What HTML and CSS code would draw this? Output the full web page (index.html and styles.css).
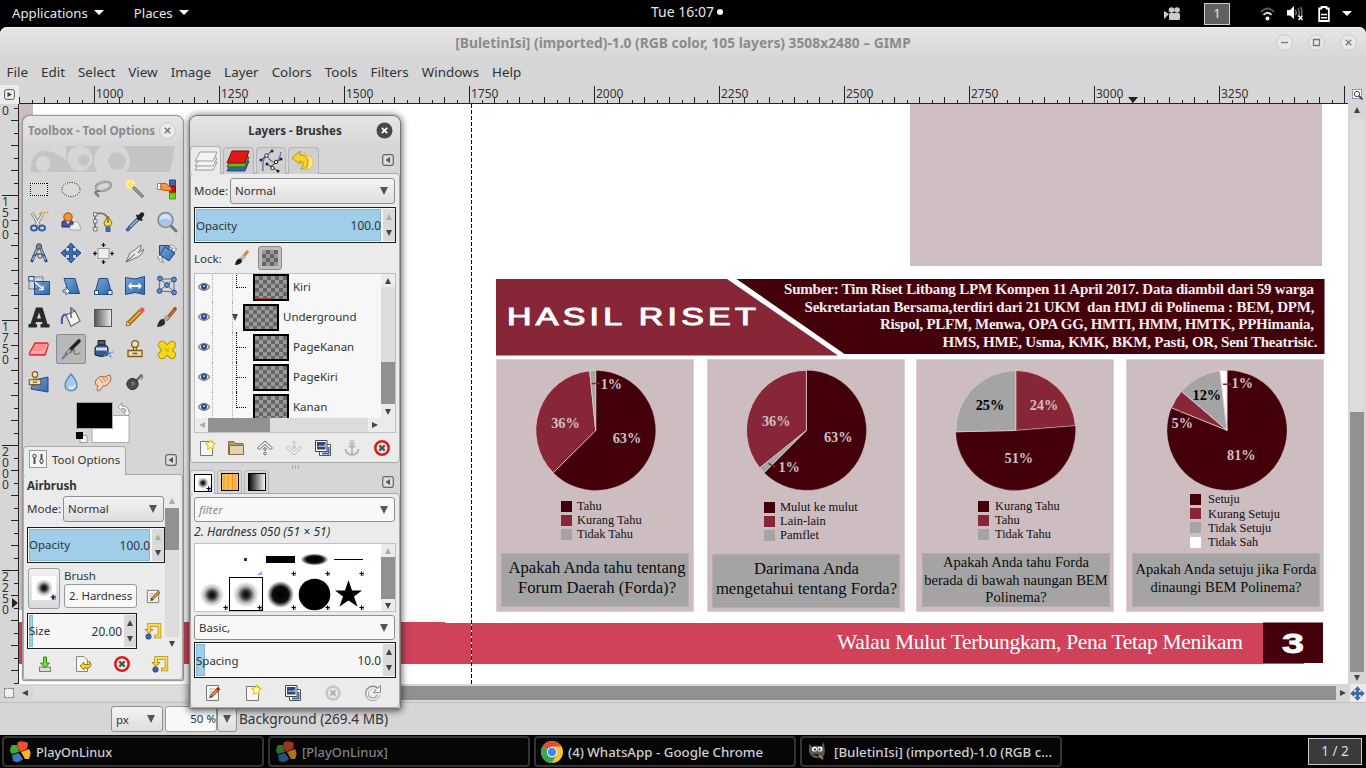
FILE: index.html
```html
<!DOCTYPE html>
<html lang="en">
<head>
<meta charset="utf-8">
<title>GIMP</title>
<link rel="stylesheet" href="styles.css">
</head>
<body>
<svg width="0" height="0" class="defs">
  <defs>
    <linearGradient id="blue" x1="0" y1="0" x2="1" y2="1"><stop offset="0" stop-color="#7ba6d6"/><stop offset="1" stop-color="#2f66aa"/></linearGradient>
    <linearGradient id="bw"><stop offset="0" stop-color="#000"/><stop offset="1" stop-color="#fff"/></linearGradient>
    <linearGradient id="grayfade"><stop offset="0" stop-color="#555"/><stop offset="1" stop-color="#eee"/></linearGradient>
    <radialGradient id="soft"><stop offset="0" stop-color="#000"/><stop offset=".3" stop-color="#000" stop-opacity=".8"/><stop offset=".65" stop-color="#000" stop-opacity=".25"/><stop offset="1" stop-color="#000" stop-opacity="0"/></radialGradient>
    <radialGradient id="firm"><stop offset="0" stop-color="#000"/><stop offset=".6" stop-color="#000" stop-opacity=".95"/><stop offset="1" stop-color="#000" stop-opacity="0"/></radialGradient>
    <symbol id="eye" viewBox="0 0 12 10"><path d="M0 5Q6-2 12 5Q6 12 0 5Z" fill="#e8e8e8" stroke="#8a8a80" stroke-width="1.3"/><circle cx="6" cy="4.8" r="3" fill="#204a87"/><circle cx="6" cy="4.2" r="1.1" fill="#9cc0e8"/></symbol>
    <symbol id="newdoc" viewBox="0 0 18 18"><path d="M2.500 2.500H14.500V16.500H2.500Z" fill="#f6f6f4" stroke="#777"/><path d="M12.500 1L14 3.800L17 4.500L15 6.800L15.300 10L12.500 8.700L9.700 10L10 6.800L8 4.500L11 3.800Z" fill="#fffbe0" stroke="#e8cf00" stroke-width="1.300"/></symbol>
    <symbol id="dup" viewBox="0 0 18 18"><path d="M5.500 5.500H16.500V16.500H5.500Z" fill="#fff" stroke="#555"/><path d="M8 14.500H14.500V8" fill="none" stroke="#4068a0" stroke-width="2"/><path d="M1.500 1.500H13V12.500H1.500Z" fill="#fff" stroke="#444"/><path d="M3 3H11.500V10.500H3Z" fill="#2c4a78"/><path d="M3 8L6 6L8 7L11.500 5V8Z" fill="#8eb0d8"/></symbol>
    <symbol id="del" viewBox="0 0 18 18"><circle cx="9" cy="9" r="6.700" fill="#eee" stroke="#d8201c" stroke-width="2.600"/><path d="M6.300 6.300L11.700 11.700M11.700 6.300L6.300 11.700" stroke="#555" stroke-width="2.400"/></symbol>
    <symbol id="reset" viewBox="0 0 18 18"><path d="M5 9V3H15.500V14.500H10" fill="none" stroke="#b08c00" stroke-width="3.400"/><path d="M1 7.500H9L5 11.500Z" fill="#f5d040" stroke="#b08c00"/><path d="M5 8.500V3H15.500V14.500H10.600" fill="none" stroke="#f9da50" stroke-width="2"/><circle cx="4.500" cy="14.500" r="2.700" fill="#3a68a8" stroke="#204a87" stroke-width=".8"/></symbol>
    <symbol id="edit" viewBox="0 0 18 18"><path d="M2.500 2.500H14.500V15.500H2.500Z" fill="#f6f6f4" stroke="#777"/><path d="M4.500 6H11M4.500 8.500H9M4.500 11H8" stroke="#aaa"/><path d="M7 12.500L15 4" stroke="#7a4a10" stroke-width="3"/><path d="M8 11.500L14.500 4.500" stroke="#e8a040" stroke-width="1.600"/><path d="M5.500 14L6.800 11L8.500 12.700Z" fill="#333"/></symbol>
    <symbol id="move" viewBox="0 0 22 22"><path d="M11 1L15 5.500H12.300V9.700H16.500V7L21 11L16.500 15V12.300H12.300V16.500H15L11 21L7 16.500H9.700V12.300H5.500V15L1 11L5.500 7V9.700H9.700V5.500H7Z" fill="#3a72b8" stroke="#204a87"/></symbol>
    <symbol id="pol" viewBox="0 0 22 22"><path d="M9 1Q14-1 19 2L18 8L11 11Q7 5 9 1Z" fill="#f0512d"/><path d="M3 4L8 4L10 11L3 13Q-1 10 3 4Z" fill="#3faa35"/><path d="M12 11L20 8Q23 12 20 18L16 18Z" fill="#f7b52b"/><path d="M3 14L10 12L14 18Q10 23 4 20Z" fill="#3b78c0"/></symbol>
    <symbol id="stamp" viewBox="0 0 22 22"><path d="M9.500 9H12.500V13H9.500Z" fill="#e8cc98" stroke="#7a5a1c"/><circle cx="11" cy="6" r="3.400" fill="#f2dfb6" stroke="#7a5a1c" stroke-width="1.300"/><path d="M4 12.500H18V18.500H4Z" fill="#f2dfb6" stroke="#7a5a1c" stroke-width="1.300"/><path d="M8.500 15.500H13.500" stroke="#7a5a1c" stroke-width="1.500"/></symbol>
    <symbol id="menubtn" viewBox="0 0 12 12"><rect x=".7" y=".7" width="10.600" height="10.600" rx="2" fill="#ddd" stroke="#666" stroke-width="1.200"/><path d="M8 3V9L3.500 6Z" fill="#555"/></symbol>
    <symbol id="plus" viewBox="0 0 6 6"><path d="M6 0V6H1Z" fill="#8aa4ff"/><path d="M3 .5V5.500M.5 3H5.500" stroke="#000" stroke-width="1.200"/></symbol>
  </defs>
</svg>

<header class="topbar">
  <span class="top-item">Applications<i class="caret"></i></span>
  <span class="top-item">Places<i class="caret"></i></span>
  <span class="clock">Tue 16:07<i class="dot"></i></span>
  <div class="tray">
    <svg class="cam" width="17" height="14" viewBox="0 0 17 14"><path d="M0 4L5 7L0 12Z" fill="#ccc"/><circle cx="7.500" cy="3" r="2.800" fill="#ccc"/><circle cx="13" cy="3" r="2.800" fill="#ccc"/><rect x="5" y="6" width="11" height="7" rx="1.500" fill="#ccc"/></svg>
    <span class="ws">1</span>
    <svg class="wifi" width="15" height="14" viewBox="0 0 15 14" fill="none"><path d="M1 5Q7.500-2 14 5" stroke="#555" stroke-width="1.800"/><path d="M3.500 8Q7.500 3.500 11.500 8" stroke="#ddd" stroke-width="1.800"/><circle cx="7.500" cy="11.500" r="2" fill="#fff"/></svg>
    <svg class="vol" width="17" height="15" viewBox="0 0 17 15"><path d="M0 4H3L7 0V13L3 9.500H0Z" fill="#fff"/><path d="M8.500 3.500Q10 6.500 8.500 9.500M11 2Q13.500 6.500 11 11M13.500 1Q16 5 14.500 9" fill="none" stroke="#777" stroke-width="1.300"/><path d="M11.500 9.500L15.500 14M15.500 9.500L11.500 14" stroke="#fff" stroke-width="1.400"/></svg>
    <svg class="bat" width="12" height="16" viewBox="0 0 12 16"><path d="M3.500 2.500V1H8.500V2.500H10.800V15H1.200V2.500Z" fill="none" stroke="#fff" stroke-width="1.800"/><path d="M3 8.500H9M3 11.700H9" stroke="#fff" stroke-width="1.500"/></svg>
    <i class="caret"></i>
  </div>
</header>

<main class="gimp">
  <div class="titlebar">
    <span class="title">[BuletinIsi] (imported)-1.0 (RGB color, 105 layers) 3508x2480 – GIMP</span>
    <div class="wbtns">
      <svg viewBox="0 0 17 17"><circle cx="8.500" cy="8.500" r="7.800"/><path d="M5 8.500H12"/></svg>
      <svg viewBox="0 0 17 17"><circle cx="8.500" cy="8.500" r="7.800"/><path d="M5.500 5.500H11.500V11.500H5.500Z"/></svg>
      <svg viewBox="0 0 17 17"><circle cx="8.500" cy="8.500" r="7.800"/><path d="M5.800 5.800L11.200 11.200M11.200 5.800L5.800 11.200"/></svg>
    </div>
  </div>
  <nav class="menubar"><span>File</span><span>Edit</span><span>Select</span><span>View</span><span>Image</span><span>Layer</span><span>Colors</span><span>Tools</span><span>Filters</span><span>Windows</span><span>Help</span></nav>

  <div class="hruler-row">
    <div class="corner"><svg width="11" height="11" viewBox="0 0 11 11"><rect x=".6" y=".6" width="9.800" height="9.800" rx="2" fill="#eee" stroke="#555"/><path d="M3.500 3V8L8 5.500Z" fill="#444"/></svg></div>
    <svg class="hruler" width="1329" height="19" shape-rendering="crispEdges">
      <path d="M0 18.500H1329" stroke="#222"/>
      <g stroke="#222"><path d="M75 9.500H1329" stroke-width="17" stroke-dasharray="1 124"/><path d="M0 15H1329" stroke-width="7" stroke-dasharray="1 24"/><path d="M13 16.500H1329" stroke-width="4" stroke-dasharray="1 24"/></g>
      <g class="rtext"><text x="77" y="13">1000</text><text x="202" y="13">1250</text><text x="327" y="13">1500</text><text x="452" y="13">1750</text><text x="577" y="13">2000</text><text x="702" y="13">2250</text><text x="827" y="13">2500</text><text x="952" y="13">2750</text><text x="1077" y="13">3000</text><text x="1202" y="13">3250</text></g>
      <path d="M1109 12H1119L1114 18Z" fill="#222" shape-rendering="auto"/>
    </svg>
    <div class="corner-r"><svg width="11" height="11" viewBox="0 0 11 11"><rect x=".5" y=".5" width="9" height="9" fill="#fff" stroke="#204a87" stroke-dasharray="1 1"/><circle cx="5" cy="5" r="2.600" fill="none" stroke="#444"/><path d="M7 7L10.500 10.500" stroke="#444" stroke-width="1.800"/></svg></div>
  </div>

  <div class="work">
    <svg class="vruler" width="19" height="581" shape-rendering="crispEdges">
      <path d="M18.500 0V581" stroke="#222"/>
      <g stroke="#222"><path d="M10 91V581" stroke-width="17" stroke-dasharray="1 124"/><path d="M14.500 16V581" stroke-width="7" stroke-dasharray="1 24"/><path d="M16 4V581" stroke-width="4" stroke-dasharray="1 24"/></g>
      <g class="rtext"><text x="2" y="11">0</text>
      <text y="102"><tspan x="2">1</tspan><tspan x="2" dy="11">5</tspan><tspan x="2" dy="11">0</tspan><tspan x="2" dy="11">0</tspan></text>
      <text y="227"><tspan x="2">1</tspan><tspan x="2" dy="11">7</tspan><tspan x="2" dy="11">5</tspan><tspan x="2" dy="11">0</tspan></text>
      <text y="352"><tspan x="2">2</tspan><tspan x="2" dy="11">0</tspan><tspan x="2" dy="11">0</tspan><tspan x="2" dy="11">0</tspan></text>
      <text y="477"><tspan x="2">2</tspan><tspan x="2" dy="11">2</tspan><tspan x="2" dy="11">5</tspan><tspan x="2" dy="11">0</tspan></text></g>
      <path d="M12 494V504L18 499Z" fill="#222" shape-rendering="auto"/>
    </svg>

    <section class="canvas">
      <div class="leftstrip"></div>
      <div class="pinkblock"></div>
      <div class="guide"></div>
      <div class="poster">
        <svg class="banner" width="829" height="77" viewBox="0 0 829 77">
          <path d="M0 0H231L342 76.500H0Z" fill="#872637"/>
          <path d="M240.500 0H828.500V75H348.500Z" fill="#43000b"/>
          <text class="hasil" x="11" y="46" textLength="253" lengthAdjust="spacingAndGlyphs">HASIL RISET</text>
          <g class="src"><text x="288" y="15" textLength="530">Sumber: Tim Riset Litbang LPM Kompen 11 April 2017. Data diambil dari 59 warga</text>
          <text x="308.500" y="32.500" textLength="510" xml:space="preserve">Sekretariatan Bersama,terdiri dari 21 UKM  dan HMJ di Polinema : BEM, DPM,</text>
          <text x="384" y="50" textLength="434">Rispol, PLFM, Menwa, OPA GG, HMTI, HMM, HMTK, PPHimania,</text>
          <text x="446.500" y="67.500" textLength="375">HMS, HME, Usma, KMK, BKM, Pasti, OR, Seni Theatrisic.</text></g>
        </svg>
        <div class="cards">
          <article class="card">
            <svg class="pie" viewBox="-99.700 -70.500 198 135"><path class="d" d="M0 0V-60A60 60 0 1 1-42.500 42.300Z"/><path class="m" d="M0 0L-42.500 42.300A60 60 0 0 1-6-59.700Z"/><path class="g" d="M0 0L-6-59.700L0-60Z"/><path class="tick" d="M-4-47H4"/><text x="5" y="-42">1%</text><text x="-44.500" y="-3">36%</text><text x="17" y="12.500">63%</text></svg>
            <ul class="legend lg1"><li><i class="sd"></i>Tahu</li><li><i class="sm"></i>Kurang Tahu</li><li><i class="sg"></i>Tidak Tahu</li></ul>
            <p class="q q1">Apakah Anda tahu tentang<br>Forum Daerah (Forda)?</p>
          </article>
          <article class="card c2">
            <svg class="pie" viewBox="-99.400 -70.300 198 135"><path class="d" d="M0 0V-60A60 60 0 1 1-42.300 42.500Z"/><path class="g" d="M0 0L-42.300 42.500L-46.700 37.600Z"/><path class="m" d="M0 0L-46.700 37.600A60 60 0 0 1 0-60Z"/><path class="tick" d="M-38 33L-31 37"/><text x="-28" y="41.500">1%</text><text x="-44.500" y="-4">36%</text><text x="17.500" y="11.500">63%</text></svg>
            <ul class="legend lg2"><li><i class="sd"></i>Mulut ke mulut</li><li><i class="sm"></i>Lain-lain</li><li><i class="sg"></i>Pamflet</li></ul>
            <p class="q q2">Darimana Anda<br>mengetahui tentang Forda?</p>
          </article>
          <article class="card c3">
            <svg class="pie" viewBox="-99.700 -70.500 198 135"><path class="m" d="M0 0V-60A60 60 0 0 1 59.800-4.700Z"/><path class="d" d="M0 0L59.800-4.700A60 60 0 1 1-60 1.300Z"/><path class="g" d="M0 0L-60 1.300A60 60 0 0 1 0-60Z"/><text class="k" x="-40" y="-21">25%</text><text x="14" y="-21">24%</text><text x="-11.200" y="32">51%</text></svg>
            <ul class="legend lg3"><li><i class="sd"></i>Kurang Tahu</li><li><i class="sm"></i>Tahu</li><li><i class="sg"></i>Tidak Tahu</li></ul>
            <p class="q q3">Apakah Anda tahu Forda<br>berada di bawah naungan BEM<br>Polinema?</p>
          </article>
          <article class="card c4">
            <svg class="pie" viewBox="-101 -70.300 198 135"><path class="d" d="M0 0V-60A60 60 0 1 1-55.600-22.500Z"/><path class="m" d="M0 0L-55.600-22.500A60 60 0 0 1-45.500-39Z"/><path class="g" d="M0 0L-45.500-39A60 60 0 0 1-7.200-59.600Z"/><path class="w" d="M0 0L-7.200-59.600L0-60Z"/><path class="tick" d="M-4-46H4M-47-19L-45-16"/><text x="4.500" y="-42">1%</text><text class="k" x="-34.500" y="-30">12%</text><text x="-55.500" y="-2.500">5%</text><text x="0" y="30">81%</text></svg>
            <ul class="legend lg4"><li><i class="sd"></i>Setuju</li><li><i class="sm"></i>Kurang Setuju</li><li><i class="sg"></i>Tidak Setuju</li><li><i class="sw"></i>Tidak Sah</li></ul>
            <p class="q q4">Apakah Anda setuju jika Forda<br>dinaungi BEM Polinema?</p>
          </article>
        </div>
      </div>
      <footer class="strip">
        <svg width="1304" height="42" viewBox="0 0 1304 42"><path d="M0 0H426V1H1304V41H1285V42H0Z" fill="#d0415a"/><path d="M1244 .5H1304V41H1244Z" fill="#43000b"/><text class="walau" x="818" y="26.500" textLength="406">Walau Mulut Terbungkam, Pena Tetap Menikam</text><text class="three" x="1263" y="31" textLength="22" lengthAdjust="spacingAndGlyphs">3</text></svg>
      </footer>
    </section>

    <div class="vscroll"><i class="tri up"></i><div class="vtrack"></div><div class="vthumb"></div><i class="tri down"></i></div>
  </div>

  <div class="hscroll"><i class="qmask"></i><i class="tri left"></i><div class="htrack"></div><div class="hthumb"></div><i class="tri right"></i><div class="navbox"><svg width="15" height="15"><use href="#move"/></svg></div></div>

  <div class="status">
    <div class="combo unit"><span>px</span><i class="tri down big"></i></div>
    <div class="zoom">50 %</div>
    <div class="combo zdrop"><i class="tri down big"></i></div>
    <span class="msg">Background (269.4 MB)</span>
  </div>
</main>

<footer class="taskbar">
  <div class="task"><svg width="22" height="22"><use href="#pol"/></svg>PlayOnLinux</div>
  <div class="task dim"><svg width="22" height="22"><use href="#pol"/></svg>[PlayOnLinux]</div>
  <div class="task wide"><svg width="22" height="22" viewBox="0 0 22 22"><circle cx="11" cy="11" r="11" fill="#f8c62c"/><path d="M11 11L1.500 5.500A11 11 0 0 1 20.500 5.500H11Z" fill="#e24a3b"/><path d="M11 11L1.500 5.500A11 11 0 0 0 11 22L15.500 13.500Z" fill="#34a853"/><circle cx="11" cy="11" r="5.200" fill="#fff"/><circle cx="11" cy="11" r="4.200" fill="#4285f4"/></svg>(4) WhatsApp - Google Chrome</div>
  <div class="task wide"><svg width="22" height="22" viewBox="0 0 22 22"><path d="M2 3L6 6Q10 3 14 6L17 1L18 11Q17 17 11 17Q5 18 2 11Z" fill="#5e5a52"/><circle cx="7.500" cy="8" r="2.600" fill="#eee"/><circle cx="13" cy="8" r="2.600" fill="#eee"/><circle cx="8" cy="8.500" r="1" fill="#111"/><circle cx="12.500" cy="8.500" r="1" fill="#111"/><path d="M5 13H14L11 16Z" fill="#222"/><path d="M12 14L16 18" stroke="#c87820" stroke-width="2"/></svg>[BuletinIsi] (imported)-1.0 (RGB c...</div>
  <div class="pager">1 / 2</div>
</footer>

<section class="win toolbox">
  <div class="wtitle off">Toolbox - Tool Options<svg class="close" viewBox="0 0 17 17"><circle cx="8.500" cy="8.500" r="7.800" fill="#ececec" stroke="#c8c8c8"/><path d="M5.800 5.800L11.200 11.200M11.200 5.800L5.800 11.200" stroke="#777" stroke-width="1.500"/></svg></div>
  <svg class="wilber" width="145" height="26" viewBox="0 0 145 26"><path d="M0 26Q-1 5 14 5Q24 5 35 14V0H144Q142 12 139 26Z" fill="#c4c4c4"/><ellipse cx="12" cy="18" rx="7" ry="8" fill="#d6d6d6"/><circle cx="49" cy="12.500" r="12.500" fill="#d6d6d6"/><circle cx="53" cy="14" r="5.500" fill="#c4c4c4"/><circle cx="81" cy="15" r="18" fill="#d6d6d6"/><circle cx="86" cy="15" r="9" fill="#c4c4c4"/></svg>
  <div class="tools">
    <svg viewBox="0 0 22 22"><rect x="2.500" y="5.500" width="17" height="12" fill="#d8dcd4" stroke="#fff"/><g shape-rendering="crispEdges" stroke="#000" stroke-dasharray="1 1"><path d="M2 5.500H20M2 17.500H20M2.500 5V18M19.500 5V18"/></g></svg>
    <svg viewBox="0 0 22 22"><ellipse cx="11" cy="11.500" rx="9" ry="7" fill="#d8dcd4" stroke="#fff"/><ellipse cx="11" cy="11.500" rx="9" ry="7" fill="none" stroke="#000" stroke-dasharray="1.200 1.200"/></svg>
    <svg viewBox="0 0 22 22"><path d="M5 12Q2 7 8 5Q18 2 19 7Q18 13 8 13Q2 13 4 16Q7 17 6 19" fill="none" stroke="#777" stroke-width="2.200"/><path d="M5 12Q2 7 8 5Q18 2 19 7Q18 13 8 13" fill="none" stroke="#d8d8d8" stroke-width=".9"/></svg>
    <svg viewBox="0 0 22 22"><circle cx="6.500" cy="6.500" r="5" fill="#fff3a0" opacity=".8"/><path d="M6.500 2.500L7.700 5.300L10.500 6.500L7.700 7.700L6.500 10.500L5.300 7.700L2.500 6.500L5.300 5.300Z" fill="#ffe84a"/><path d="M9 9L19 19" stroke="#555" stroke-width="3"/><path d="M9 9L18.500 18.500" stroke="#bbb5a0" stroke-width="1.200"/></svg>
    <svg viewBox="0 0 22 22"><path d="M13.500 2H19.500V8H13.500Z" fill="#3a68a8" stroke="#204a87"/><path d="M13.500 8.500H19.500V14.500H13.500Z" fill="#d01010" stroke="#900"/><path d="M13.500 15H19.500V21H13.500Z" fill="#73d216" stroke="#4e9a06"/><path d="M1.500 5.500H5V11.500H1.500Z" fill="#fff" stroke="#888"/><path d="M5 5.500H10L15 9.500V12.500H9L5 11.500Z" fill="#f9963a" stroke="#c05a00"/></svg>

    <svg viewBox="0 0 22 22"><path d="M12 11V2.500H21" fill="none" stroke="#e8941a" stroke-width="1.300" stroke-dasharray="2 1"/><path d="M4 3L11 15M15 4L8 15" stroke="#777" stroke-width="3"/><path d="M4 3L11 15M15 4L8 15" stroke="#eee" stroke-width="1.400"/><ellipse cx="6" cy="18" rx="3" ry="2.600" fill="none" stroke="#2f5fa5" stroke-width="2"/><ellipse cx="14" cy="18" rx="3" ry="2.600" fill="none" stroke="#2f5fa5" stroke-width="2"/></svg>
    <svg viewBox="0 0 22 22"><path d="M2 17V12Q7 7 13 12V17Z" fill="#2f5fa5" stroke="#704"/><path d="M6 11L8 14L10 11Z" fill="#fff"/><circle cx="8" cy="7" r="4.200" fill="#f0953c" stroke="#a04a00"/><path d="M10 20Q9 15 13 15Q14 11 18 12Q20 15 21 20Z" fill="#eee" stroke="#aaa"/></svg>
    <svg viewBox="0 0 22 22"><path d="M3 4V19M4 4Q13 1 16 9" fill="none" stroke="#666" stroke-width="1.500"/><path d="M1.500 2.500H5V6H1.500ZM1.500 9.500H5V13H1.500ZM1.500 17.500H5V21H1.500Z" fill="#eee" stroke="#777"/><path d="M16 6L20 13L18 16H13L12 13Z" fill="#f6dc4c" stroke="#8a6d00"/><path d="M13.500 16.500H18.500V22H13.500Z" fill="#3a68a8"/><path d="M16 8V13" stroke="#333"/></svg>
    <svg viewBox="0 0 22 22"><path d="M14 9L5 18" stroke="#35506c" stroke-width="3.800"/><path d="M14 9L6 17" stroke="#9cc4ee" stroke-width="1.600"/><path d="M12.500 5L18 10.500" stroke="#222" stroke-width="2.300"/><path d="M15 8L18 4.500" stroke="#222" stroke-width="4.400" stroke-linecap="round"/><circle cx="3.800" cy="19.500" r="2" fill="#2f66aa"/></svg>
    <svg viewBox="0 0 22 22"><path d="M15 16L20 21" stroke="#777" stroke-width="3" stroke-linecap="round"/><circle cx="9.500" cy="10" r="7.500" fill="#a9c6ea" stroke="#888" stroke-width="1.500"/><path d="M3.500 10Q9 7 15.500 10Q15 4 9.500 4Q4 4 3.500 10Z" fill="#d3e2f4"/></svg>

    <svg viewBox="0 0 22 22"><path d="M9.500 6L3.500 20M12.500 6L18.500 20" stroke="#2c4a70" stroke-width="3"/><path d="M9.500 6L4.500 18M12.500 6L17.500 18" stroke="#8db4e0" stroke-width="1.500"/><circle cx="11" cy="4.500" r="2.700" fill="#888" stroke="#444"/><path d="M5 14Q11 10 17 14" fill="none" stroke="#555" stroke-width="1.500"/><circle cx="12" cy="14" r="2.200" fill="#ddd" stroke="#444"/></svg>
    <svg viewBox="0 0 22 22"><use href="#move"/></svg>
    <svg viewBox="0 0 22 22"><rect x="6" y="6.500" width="11" height="10" fill="#eee" stroke="#999"/><path d="M11.500 1V5M11.500 18V22M1 11.500H5M18 11.500H22M9.500 3H13.500M9.500 20H13.500M3 9.500V13.500M20 9.500V13.500" stroke="#000" stroke-width="1.200"/></svg>
    <svg viewBox="0 0 22 22"><path d="M2 20L6 11Q12 7 17 3Q18 7 14 11L20 7Q19 12 14 15Z" fill="#e6e6e6" stroke="#777"/><path d="M2 20L11 12" stroke="#555"/></svg>
    <svg viewBox="0 0 22 22"><path d="M3.500 3.500H13V13.500H3.500Z" fill="url(#blue)" stroke="#204a87"/><path d="M9 5L19 11L13 19L4 13Z" fill="url(#blue)" stroke="#204a87"/><path d="M14 3Q19 3 19 7H21L18 10L15 7H17Q17 5 14 5ZM1 16L4 13L7 16H5Q5 19 8 20Q3 21 3 16Z" fill="#fff" stroke="#46628a" stroke-width=".6"/></svg>

    <svg viewBox="0 0 22 22"><path d="M6.500 7.500H21.500V20.500H6.500Z" fill="url(#blue)" stroke="#204a87"/><path d="M1 3H15V15H1Z" fill="none" stroke="#204a87" stroke-dasharray="1.500 1"/><path d="M.8 2.500H6V7H.8Z" fill="#dce8f6" stroke="#204a87"/><path d="M7 8L15 15M15 11.500V15.500H11" stroke="#fff" stroke-width="1.300" fill="none"/></svg>
    <svg viewBox="0 0 22 22"><path d="M4 4.500H15L19.500 19.500H9Z" fill="url(#blue)" stroke="#204a87"/><path d="M3 16H6V13L10 17L6 21V18H3Z" fill="#fff" stroke="#204a87" stroke-width=".8"/></svg>
    <svg viewBox="0 0 22 22"><path d="M7 4.500H15.500L20 20.500H2.500Z" fill="url(#blue)" stroke="#204a87"/><path d="M2.500 16.500H6.500V20.500H2.500ZM16 16.500H20V20.500H16Z" fill="#fff" stroke="#204a87"/></svg>
    <svg viewBox="0 0 22 22"><path d="M1.500 3.500L11 5L20.500 2.500V20.500L11 18.500L1.500 20.500Z" fill="url(#blue)" stroke="#204a87"/><path d="M4 12L7.500 8.500V11H14.500V8.500L18 12L14.500 15.500V13H7.500V15.500Z" fill="#fff"/></svg>
    <svg viewBox="0 0 22 22"><path d="M4 5L18 5L18 18L3 17L4 5M4 5L11 11L18 5M11 11L18 18M11 11L3 17" stroke="#666" fill="none"/><g fill="#5b92d4" stroke="#204a87"><circle cx="4" cy="4.500" r="2.400"/><circle cx="18" cy="5.500" r="2.400"/><circle cx="11" cy="11" r="2.400"/><circle cx="3.500" cy="17" r="2.400"/><circle cx="18" cy="18.500" r="2.400"/></g></svg>

    <svg viewBox="0 0 22 22"><path fill-rule="evenodd" d="M8 1.500H14.500L19.500 18H21.500V21.500H12.500V18H14.500L14 16H8L7.300 18H9V21.500H.5V18H2.500ZM9 12.500H13L11 6.500Z" fill="#2a2a2a"/></svg>
    <svg viewBox="0 0 22 22"><path d="M6 9L15 5L20 15L11 20.500Z" fill="#f4f4f2" stroke="#666" stroke-width="1.200"/><path d="M11 12V2L15 5" fill="none" stroke="#666" stroke-width="1.500"/><path d="M7 9Q1 7 2 18" fill="none" stroke="#3a68a8" stroke-width="2.200"/></svg>
    <svg viewBox="0 0 22 22"><rect x="2.500" y="3.500" width="17" height="17" fill="url(#grayfade)" stroke="#555"/></svg>
    <svg viewBox="0 0 22 22"><path d="M4.500 17.500L17 5" stroke="#8a5a10" stroke-width="4.600"/><path d="M5 17L17 5" stroke="#e0a030" stroke-width="2.600"/><path d="M2 20L3 15L7 19Z" fill="#e8c890" stroke="#8a5a10" stroke-width=".8"/><circle cx="18" cy="4" r="2.500" fill="#f05858"/></svg>
    <svg viewBox="0 0 22 22"><path d="M19 3L11 13" stroke="#8a4a10" stroke-width="3.600" stroke-linecap="round"/><path d="M19 3L13 11" stroke="#d07020" stroke-width="1.800"/><path d="M12 10L8.500 14" stroke="#aaa" stroke-width="4.500"/><path d="M1 21Q3 12 7.500 13Q10.500 16 8 19Q5 21 1 21Z" fill="#2a2a2a"/></svg>

    <svg viewBox="0 0 22 22"><path d="M7 5H18Q21 5 20 8L17 17H5Q0 18 2 14Z" fill="#f59090" stroke="#e02828" stroke-width="1.300"/><path d="M3 14Q9 14 16 14L19 7" fill="none" stroke="#ffc8c8"/></svg>
    <svg class="sel" viewBox="0 0 22 22"><path d="M11 11L19 3" stroke="#222" stroke-width="3.600" stroke-linecap="round"/><path d="M6 16L11 11" stroke="#555" stroke-width="3"/><path d="M7 15L10 12" stroke="#ddd" stroke-width="1.200"/><path d="M1 21L5 15.500L7 17.500L3 21.500Z" fill="#5b86c0"/><path d="M10 15Q16 9 14 14Q14 18 20 15" fill="none" stroke="#777" stroke-width="1.300"/></svg>
    <svg viewBox="0 0 22 22"><path d="M6 2.500H13V7H6Z" fill="#555" stroke="#222"/><path d="M3 17V10Q3 8 7 7H13Q16 8 16 10V17Q9 20 3 17Z" fill="#34598c" stroke="#223"/><path d="M4 11H15" stroke="#cfe0f5" stroke-width="3"/><path d="M12 18L21 14M14 13L20 20" stroke="#5b86c0" stroke-width="1.600" stroke-dasharray="2 1"/></svg>
    <svg viewBox="0 0 22 22"><use href="#stamp"/></svg>
    <svg viewBox="0 0 22 22"><path d="M6 7L16 17M16 7L6 17" stroke="#b09000" stroke-width="8.200" stroke-linecap="round"/><path d="M6 7L16 17M16 7L6 17" stroke="#f4d91c" stroke-width="6.400" stroke-linecap="round"/><path d="M9 10L13 14M13 10L9 14" stroke="#c8a800" stroke-width="1.500" stroke-dasharray="1 1"/></svg>

    <svg viewBox="0 0 22 22"><path d="M6 9L20 6V21L3 18Z" fill="url(#blue)" stroke="#204a87"/><svg x="-2" y="-2" width="18" height="19"><use href="#stamp"/></svg></svg>
    <svg viewBox="0 0 22 22"><path d="M11 3Q17 10 17 14.500A6 5.500 0 0 1 5 14.500Q5 10 11 3Z" fill="#a6c9ee" stroke="#5580b0" stroke-width="1.200"/><path d="M9 16Q13 18 15 14" stroke="#fff" fill="none" stroke-width="1.500"/></svg>
    <svg viewBox="0 0 22 22"><path d="M4 9Q8 4 12 6L18 4L19 8Q17 15 11 15Q9 20 6 20Q4 20 6 15Q2 14 4 9Z" fill="#f7d3b4" stroke="#a06840"/><path d="M8 8L11 12M11 7L14 11M14 6L16 9" stroke="#a06840" stroke-width=".8"/></svg>
    <svg viewBox="0 0 22 22"><path d="M11 11L18 3.500" stroke="#666" stroke-width="2.200"/><path d="M17 9L19 5" stroke="#888" stroke-width="1.600"/><circle cx="8.500" cy="13" r="5.600" fill="#4a4a4a" stroke="#2a2a2a"/><circle cx="9" cy="12.500" r="2" fill="#777"/></svg>
  </div>
  <div class="colors"><svg width="60" height="46" viewBox="0 0 60 46"><rect x="17" y="15.500" width="37" height="27" fill="#fff" stroke="#aaa"/><rect x="1.500" y="2.500" width="36" height="26" fill="#000" stroke="#aaa"/><path d="M47 6V3L43 7L47 10.500V8Q51 8 51 12H48L52 16L56 12H53.500Q54 6 47 6Z" fill="#fff" stroke="#999"/><rect x="5" y="35.500" width="7" height="7" fill="#fff" stroke="#999"/><rect x="1" y="32" width="7" height="7" fill="#000"/></svg></div>
  <div class="totab-row"><div class="totab"><svg width="18" height="18" viewBox="0 0 18 18"><rect x=".5" y=".5" width="17" height="17" fill="#f4f4f4" stroke="#999"/><path d="M5.500 4V14M12.500 4V14" stroke="#555" stroke-width="2"/><circle cx="5.500" cy="6" r="1.700" fill="#fff" stroke="#444"/><circle cx="12.500" cy="11" r="1.700" fill="#fff" stroke="#444"/></svg>Tool Options</div><svg class="mb" width="12" height="12"><use href="#menubtn"/></svg></div>
  <div class="topanel">
    <div class="toscroll">
      <div class="tocol">
        <b class="airbrush">Airbrush</b>
        <div class="moderow">Mode:<div class="combo grow"><span>Normal</span><i class="tri down big"></i></div></div>
        <div class="scale s-to"><div class="fill f100"></div><span class="sl">Opacity</span><span class="sv">100.0</span><div class="step"><i class="tri up dim"></i><i class="tri down"></i></div></div>
        <div class="brushrow">
          <div class="brushbtn"><svg width="24" height="24" viewBox="0 0 24 24"><rect width="24" height="24" fill="#fff"/><circle cx="12" cy="12" r="9" fill="url(#soft)"/><svg x="18" y="18" width="6" height="6"><use href="#plus"/></svg></svg></div>
          <div class="brushname"><span>Brush</span><div class="entry">2. Hardness</div></div>
          <svg class="bedit" width="17" height="17"><use href="#edit"/></svg>
        </div>
        <div class="sizerow"><div class="scale s-size"><div class="fill f3"></div><span class="sl">Size</span><span class="sv">20.00</span><div class="step"><i class="tri up"></i><i class="tri down"></i></div></div><svg width="18" height="18"><use href="#reset"/></svg></div>
      </div>
      <div class="minivs"><i class="tri up dim"></i><div class="mt1"></div><div class="mt2"></div><i class="tri down"></i></div>
    </div>
    <div class="toicons">
      <svg width="18" height="18" viewBox="0 0 18 18"><path d="M3.500 12H14.500V16.500H3.500Z" fill="#ddd" stroke="#777"/><path d="M7.500 2H10.500V8H13.500L9 13L4.500 8H7.500Z" fill="#7ed63a" stroke="#3a8a06"/></svg>
      <svg width="18" height="18" viewBox="0 0 18 18"><path d="M2.500 1.500H10L13.500 5V16.500H2.500Z" fill="#f6f6f4" stroke="#888"/><path d="M6 11L10 7V9.500H15Q16 9.500 15 6Q19 10 15 13H10V15Z" fill="#f5d040" stroke="#a08000"/></svg>
      <svg width="18" height="18"><use href="#del"/></svg>
      <svg width="18" height="18"><use href="#reset"/></svg>
    </div>
  </div>
</section>

<section class="win layers">
  <div class="wtitle">Layers - Brushes<svg class="close" viewBox="0 0 17 17"><circle cx="8.500" cy="8.500" r="8" fill="#484848"/><path d="M5.800 5.800L11.200 11.200M11.200 5.800L5.800 11.200" stroke="#fff" stroke-width="1.800"/></svg></div>
  <div class="tabs">
    <div class="tab on"><svg width="24" height="24" viewBox="0 0 24 24"><g fill="#f4f4f4" stroke="#999"><path d="M6 13H23L19 21H1Z"/><path d="M6 9H23L19 17H1Z"/><path d="M6 3H23L19 12H1Z"/></g></svg></div>
    <div class="tab"><svg width="24" height="24" viewBox="0 0 24 24"><path d="M6 12H23L19 22H1Z" fill="#3465a4" stroke="#204a87"/><path d="M6 8H23L19 18H1Z" fill="#5cb82a" stroke="#2f6b06"/><path d="M6 2H23L19 14H1Z" fill="#e01818" stroke="#8a0000"/></svg></div>
    <div class="tab"><svg width="24" height="24" viewBox="0 0 24 24"><path d="M4 22Q3 8 8 7Q12 14 17 13Q21 10 22 3" fill="none" stroke="#4a78b8" stroke-width="1.300"/><path d="M2 11L13 2M8 15L19 22M11 18L22 10" stroke="#333" stroke-width="1"/><g fill="#222"><circle cx="2" cy="11" r="1.500"/><circle cx="13" cy="2" r="1.500"/><circle cx="22" cy="10" r="1.500"/><circle cx="19" cy="22" r="1.500"/><circle cx="8" cy="15" r="1.500"/></g><circle cx="7.500" cy="6.500" r="1.700" fill="#fff" stroke="#222"/><circle cx="17" cy="13" r="1.700" fill="#fff" stroke="#222"/><circle cx="13.500" cy="19" r="1.700" fill="#fff" stroke="#222"/></svg></div>
    <div class="tab"><svg width="24" height="24" viewBox="0 0 24 24"><path d="M7 9L14 3V6Q23 7 22 14Q21 20 15 21Q19 14 14 12V15Z" fill="#f8e88a" stroke="#d8c050"/><path d="M1 9L9 2V6Q18 6 17 14Q16 20 10 20Q15 13 9 12V15Z" fill="#f7d22e" stroke="#b89400"/></svg></div>
    <svg class="mb" width="12" height="12"><use href="#menubtn"/></svg>
  </div>
  <div class="lpanel">
    <div class="moderow lm">Mode:<div class="combo grow"><span>Normal</span><i class="tri down big"></i></div></div>
    <div class="scale s-lay"><div class="fill f100"></div><span class="sl">Opacity</span><span class="sv">100.0</span><div class="step"><i class="tri up dim"></i><i class="tri down"></i></div></div>
    <div class="lockrow">Lock:<svg width="16" height="16" viewBox="0 0 16 16"><path d="M14 1L8 8" stroke="#d08838" stroke-width="3"/><path d="M10.500 6L7 9.500" stroke="#bbb" stroke-width="4"/><path d="M1 15Q2 8 6.500 8.500Q9 11 7 13Q5 15 1 15Z" fill="#1a1a1a"/></svg><div class="lockbtn"><i class="checker"></i></div></div>
    <div class="list">
      <div class="rows">
        <div class="row"><svg class="eye" width="12" height="10"><use href="#eye"/></svg><i class="br last"></i><i class="thumb red"></i><span>Kiri</span></div>
        <div class="row grp"><svg class="eye" width="12" height="10"><use href="#eye"/></svg><i class="tri down exp"></i><i class="thumb"></i><span>Underground</span></div>
        <div class="row"><svg class="eye" width="12" height="10"><use href="#eye"/></svg><i class="br"></i><i class="thumb"></i><span>PageKanan</span></div>
        <div class="row"><svg class="eye" width="12" height="10"><use href="#eye"/></svg><i class="br"></i><i class="thumb"></i><span>PageKiri</span></div>
        <div class="row"><svg class="eye" width="12" height="10"><use href="#eye"/></svg><i class="br last"></i><i class="thumb"></i><span>Kanan</span></div>
      </div>
      <div class="lvs"><i class="tri up"></i><div class="lv1"></div><div class="lv2"></div><i class="tri down"></i></div>
      <div class="lhs"><i class="tri left dim"></i><div class="lh1"></div><div class="lh2"></div><i class="tri right"></i></div>
    </div>
    <div class="licons">
      <svg width="18" height="18"><use href="#newdoc"/></svg>
      <svg width="18" height="18" viewBox="0 0 18 18"><path d="M1.500 2.500H7L8.500 4.500H16V15.500H1.500Z" fill="#b89a70" stroke="#8a6a40"/><path d="M2.500 6.500H16.500V15.500H2.500Z" fill="#e4d2b4" stroke="#8a6a40"/></svg>
      <svg width="18" height="18" viewBox="0 0 18 18"><g fill="#f4f4f4" stroke="#666"><path d="M9 2L16.500 9L14.500 10.500L9 5.500L3.500 10.500L1.500 9Z"/><circle cx="9" cy="10" r="1.300"/><circle cx="9" cy="14.500" r="1.300"/></g></svg>
      <svg width="18" height="18" viewBox="0 0 18 18" opacity=".35"><g fill="#f4f4f4" stroke="#666"><path d="M9 16L16.500 9L14.500 7.500L9 12.500L3.500 7.500L1.500 9Z"/><circle cx="9" cy="8" r="1.300"/><circle cx="9" cy="3.500" r="1.300"/></g></svg>
      <svg width="18" height="18"><use href="#dup"/></svg>
      <svg width="18" height="18" viewBox="0 0 18 18" opacity=".35"><path d="M9 5V15M5.500 7.500H12.500M2.500 10Q3 15.500 9 16Q15 15.500 15.500 10" fill="none" stroke="#555" stroke-width="2"/><circle cx="9" cy="3.200" r="1.800" fill="none" stroke="#555" stroke-width="1.400"/></svg>
      <svg width="18" height="18"><use href="#del"/></svg>
    </div>
  </div>
  <div class="grip"><i></i><i></i><i></i></div>
  <div class="tabs2">
    <div class="tab2 on"><svg width="18" height="18" viewBox="0 0 18 18"><rect x=".5" y=".5" width="17" height="17" fill="#fff" stroke="#000"/><circle cx="9" cy="9" r="6" fill="url(#soft)"/><svg x="12" y="12" width="5" height="5"><use href="#plus"/></svg></svg></div>
    <div class="tab2"><svg width="18" height="18" viewBox="0 0 18 18"><rect x=".5" y=".5" width="17" height="17" fill="#ffc050" stroke="#000"/><path d="M3 1V17M7 1V17M11.500 1V17M14 1V17" stroke="#e89428" stroke-width="1"/></svg></div>
    <div class="tab2"><svg width="18" height="18" viewBox="0 0 18 18"><rect x=".5" y=".5" width="17" height="17" fill="url(#bw)" stroke="#000"/></svg></div>
    <svg class="mb" width="12" height="12"><use href="#menubtn"/></svg>
  </div>
  <div class="bpanel">
    <div class="combo ent filter"><span>filter</span><i class="tri down big"></i></div>
    <div class="bname">2. Hardness 050 (51 × 51)</div>
    <div class="bgrid">
      <svg width="186" height="67" viewBox="195 544 186 67">
        <rect x="244" y="558" width="3" height="3" fill="#333"/>
        <rect x="266" y="556" width="29" height="7"/><ellipse cx="314.500" cy="559.500" rx="14" ry="6" fill="url(#firm)"/><path d="M334 559.500H363" stroke="#000"/>
        <circle cx="212" cy="595" r="12" fill="url(#soft)"/>
        <rect x="229.500" y="577.500" width="33" height="33" fill="#fff" stroke="#000"/><circle cx="246" cy="594.500" r="13" fill="url(#soft)"/>
        <circle cx="280.500" cy="594.500" r="13.500" fill="url(#firm)"/><circle cx="314.500" cy="594.500" r="15.800"/>
        <path d="M348.500 580L352 590.500H362L354 596.500L357.500 606.500L348.500 600.500L339.500 606.500L343 596.500L335 590.500H345Z"/>
        <path d="M262 571V575H257Z" fill="#8aa4ff"/>
        <g><use href="#plus" x="291" y="571" width="5" height="5"/><use href="#plus" x="325" y="571" width="5" height="5"/><use href="#plus" x="359" y="571" width="5" height="5"/><use href="#plus" x="223" y="605" width="5" height="5"/><use href="#plus" x="257" y="605" width="5" height="5"/><use href="#plus" x="291" y="605" width="5" height="5"/><use href="#plus" x="325" y="605" width="5" height="5"/><use href="#plus" x="359" y="605" width="5" height="5"/></g>
      </svg>
      <div class="bvs"><i class="tri up dim"></i><div class="bv"></div><i class="tri down"></i></div>
    </div>
    <div class="combo ent basic"><span>Basic,</span><i class="tri down big"></i></div>
    <div class="scale s-sp"><div class="fill f5"></div><span class="sl">Spacing</span><span class="sv">10.0</span><div class="step"><i class="tri up"></i><i class="tri down"></i></div></div>
    <div class="bicons">
      <svg width="18" height="18" viewBox="0 0 18 18"><path d="M2.500 1.500H14.500V16.500H2.500Z" fill="#f6f6f4" stroke="#777"/><path d="M5 5H11M5 8H9M5 11H8" stroke="#aaa"/><path d="M7.500 12L15 4" stroke="#a02010" stroke-width="3.200"/><path d="M8 11.500L13 6" stroke="#f0a040" stroke-width="1.700"/><path d="M5 14.500L6.500 11.500L8.500 13Z" fill="#333"/></svg>
      <svg width="18" height="18"><use href="#newdoc"/></svg>
      <svg width="18" height="18"><use href="#dup"/></svg>
      <svg width="18" height="18" viewBox="0 0 18 18"><circle cx="9" cy="9" r="6.500" fill="#e8e6e6" stroke="#c8c4c4" stroke-width="2.400"/><path d="M6.500 6.500L11.500 11.500M11.500 6.500L6.500 11.500" stroke="#b0b0b0" stroke-width="2.200"/></svg>
      <svg width="18" height="18" viewBox="0 0 18 18"><path d="M13 5A6 6 0 1 0 14.500 11" fill="none" stroke="#8a8a8a" stroke-width="3.400"/><path d="M9.500 8.500H16.500V1.500Z" fill="#f2f2f2" stroke="#8a8a8a"/><path d="M13 5.500A5.800 5.800 0 1 0 14.500 11" fill="none" stroke="#f2f2f2" stroke-width="1.700"/></svg>
    </div>
  </div>
</section>
</body>
</html>
```
FILE: styles.css
```css
* { box-sizing: border-box; }
body { margin: 0; width: 1366px; height: 768px; overflow: hidden; position: relative; display: flex; flex-direction: column; background: #000; font-family: "Noto Sans", "Open Sans", sans-serif; color: #2e3436; font-size: 11.5px; }
svg { display: block; flex: none; }
i { display: block; font-style: normal; flex: none; }
.defs { position: absolute; }

/* top bar */
.topbar { height: 27px; flex: none; display: flex; align-items: center; background: #000; color: #e6e6e6; font-size: 13.2px; padding: 0 14px 0 12px; position: relative; }
.top-item { display: flex; align-items: center; margin-right: 30px; margin-top: -2px; }
.caret { border: 5px solid transparent; border-top-color: #fff; border-bottom: 0; margin-left: 6px; }
.clock { position: absolute; left: 651px; top: 3px; display: flex; align-items: center; line-height: 18px; font-size: 14px; }
.dot { width: 6px; height: 6px; border-radius: 3px; background: #fff; margin-left: 3px; }
.tray { margin-left: auto; display: flex; align-items: center; }
.ws { width: 26px; height: 22px; line-height: 19px; border: 1px solid #ccc; background: #606060; text-align: center; margin: 0 30px 0 23px; }
.wifi { margin-right: 12px; }
.vol { margin-right: 14px; }
.tray .caret { margin-left: 12px; }

/* main window */
.gimp { height: 708px; flex: none; background: #d6d6d6; border-radius: 7px 7px 0 0; display: flex; flex-direction: column; }
.titlebar { height: 32px; flex: none; display: flex; align-items: center; justify-content: center; position: relative; background: linear-gradient(#e6e6e6, #d6d6d6); border-radius: 7px 7px 0 0; border-top: 1px solid #f2f2f2; }
.title { font-weight: bold; color: #8b8b8b; font-size: 13.8px; white-space: nowrap; margin-top: -3px; }
.wbtns { position: absolute; right: 9px; top: 6px; display: flex; gap: 15px; }
.wbtns svg { width: 17px; height: 17px; fill: #e8e8e8; stroke: #777; stroke-width: 1.3; }
.wbtns circle { stroke: #c8c8c8; stroke-width: 1; }
.menubar { height: 26px; flex: none; display: flex; align-items: center; gap: 13px; padding-left: 6.500px; font-size: 13.43px; }
.hruler-row { height: 19px; flex: none; display: flex; }
.corner { width: 19px; background: #ebebeb; display: flex; align-items: center; justify-content: center; }
.corner-r { width: 18px; display: flex; align-items: center; justify-content: center; }
.rtext { font-size: 12px; fill: #333; }
.work { height: 580px; flex: none; display: flex; overflow: hidden; }

/* image canvas */
.canvas { width: 1329px; height: 580px; background: #fff; position: relative; overflow: hidden; }
.leftstrip { position: absolute; left: 0; top: 0; width: 14px; height: 506px; background: #cdbcc0; }
.pinkblock { position: absolute; left: 891px; top: 0; width: 412px; height: 162px; background: #cebdc1; }
.guide { position: absolute; left: 452px; top: 0; width: 1px; height: 580px; background: repeating-linear-gradient(#000 0 4px, #fff 4px 6px); z-index: 2; }
.poster { margin: 175px 0 0 477px; width: 829px; }
.hasil { font: 400 24px "Liberation Sans", sans-serif; fill: #fff; stroke: #fff; stroke-width: 1; letter-spacing: 3px; }
.src { font: bold 15px "Liberation Serif", serif; fill: #f4eef0; }
.cards { display: flex; margin-top: 3px; }
.card { width: 198px; height: 253px; flex: none; background: #cdbcc0; border: 1px solid #ddd0d3; display: flex; flex-direction: column; position: relative; }
.c2 { margin-left: 13px; }
.c3 { margin-left: 11px; }
.c4 { margin-left: 12px; }
.pie { width: 198px; height: 135px; margin-left: -1px; }
.pie path { stroke: #d9cacd; stroke-width: .9; }
.pie .d { fill: #43000b; stroke-width: .3; }
.pie .m { fill: #872637; }
.pie .g { fill: #a4a4a4; }
.pie .w { fill: #fff; }
.pie .tick { stroke: #872637; stroke-width: 1.5; fill: none; }
.pie text { font: bold 14.3px "Liberation Serif", serif; fill: #cfc0c4; }
.pie .k { fill: #000; }
.legend { list-style: none; margin: 0; padding: 0; height: 58px; font: 12.4px/14px "Liberation Serif", serif; color: #111; }
.legend li { display: flex; align-items: center; height: 14px; }
.legend li i { width: 11px; height: 11px; }
.sd { background: #43000b; }
.sm { background: #872637; }
.sg { background: #a4a4a4; }
.sw { background: #fff; }
.lg1 { padding: 4px 0 0 64px; }
.lg1 i { margin-right: 5px; }
.lg2 { padding: 5px 0 0 56px; font-size: 12.5px; }
.lg2 i { margin-right: 5px; }
.lg3 { padding: 4px 0 0 61px; }
.lg3 i { margin-right: 6px; }
.lg4 { padding: 0 0 0 63px; }
.lg4 i { margin-right: 7px; }
.legend.lg4 { margin-top: -3px; height: 61px; }
.legend.lg4 li { height: 14.4px; }
.q { display: block; margin: 0 0 0 4px; width: 188px; height: 54px; background: #a4a4a4; border: 1px solid #b4acae; text-align: center; color: #0c0c0c; font-family: "Liberation Serif", serif; white-space: nowrap; }
.q1, .q2 { font-size: 16.65px; line-height: 20px; padding-top: 4px; }
.q1 { padding-left: 4px; }
.q2 { margin-top: 1px; padding-left: 1px; }
.q3 { margin-left: 5px; font-size: 14.550px; line-height: 17.500px; padding-top: 0; }
.q4 { margin-left: 5px; font-size: 14.550px; line-height: 17.500px; padding-top: 7px; }
.strip { margin-top: 10px; }
.walau { font: 21.500px "Liberation Serif", serif; fill: #fff; }
.three { font: bold 27px "Liberation Sans", sans-serif; fill: #fff; stroke: #fff; stroke-width: .8; }

/* triangles and scrollbars */
.tri { width: 0; height: 0; border: 3.500px solid transparent; }
.tri.up { border-bottom: 6px solid #444; border-top: 0; }
.tri.down { border-top: 6px solid #444; border-bottom: 0; }
.tri.left { border-right: 6px solid #444; border-left: 0; }
.tri.right { border-left: 6px solid #444; border-right: 0; }
.tri.big { border-width: 8px 4.500px 0; border-top-color: #555; }
.tri.up.dim { border-bottom-color: #aaa; }
.tri.left.dim { border-right-color: #aaa; }
.vscroll { width: 18px; display: flex; flex-direction: column; align-items: center; padding-top: 3px; }
.vtrack { width: 14px; height: 294px; margin-top: 5px; background: #dcdcdc; }
.vthumb { width: 14px; height: 260px; background: #919191; margin-bottom: 3px; }
.hscroll { height: 19px; flex: none; display: flex; align-items: center; border-bottom: 1px solid #c0c0c0; }
.qmask { width: 10px; height: 10px; border: 1px dashed #888; margin-left: 4px; background: #eee; }
.hscroll .left { margin-left: 8px; }
.htrack { height: 14px; width: 267px; margin-left: 5px; background: #dcdcdc; }
.hthumb { height: 14px; width: 1036px; background: #919191; }
.hscroll .right { margin-left: 4px; }
.navbox { width: 16px; height: 18px; margin-left: auto; background: #ebebeb; display: flex; align-items: center; }

/* status bar */
.status { height: 32px; display: flex; align-items: center; padding-left: 111px; }
.combo { height: 26px; border: 1px solid #8f8f8f; border-radius: 3px; background: linear-gradient(#f4f4f4, #dedede); display: flex; align-items: center; justify-content: space-between; padding: 0 6px 0 4px; white-space: nowrap; }
.unit { width: 52px; padding-right: 7px; }
.zoom { width: 52px; height: 26px; margin: 0 0 0 2px; border: 1px solid #999; border-radius: 3px; background: #f8f8f8; text-align: right; line-height: 24px; }
.zdrop { width: 20px; padding: 0 5px; }
.msg { font-size: 13.65px; margin: -2px 0 0 2px; }

/* task bar */
.taskbar { height: 33px; flex: none; background: #000; display: flex; align-items: center; gap: 4px; padding-left: 2px; }
.task { width: 262px; height: 31px; border: 2px solid #343434; border-radius: 4px; background: #060606; color: #d0d0d0; font-weight: 500; font-size: 12.7px; display: flex; align-items: center; gap: 5px; padding-left: 5px; white-space: nowrap; }
.task.wide { font-size: 13.3px; }
.task.dim { color: #808080; font-size: 12.9px; }
.task.dim svg { opacity: .65; }
.pager { margin-left: auto; margin-right: 4px; width: 54px; height: 27px; border: 1px solid #ccc; background: #3a3a3a; color: #ddd; font-size: 13.5px; text-align: center; line-height: 24px; }

/* floating docks */
.win { position: absolute; top: 115px; background: #d6d6d6; border: 1px solid #9a9a9a; border-radius: 8px 8px 2px 2px; display: flex; flex-direction: column; }
.toolbox { left: 22px; width: 162px; height: 566px; box-shadow: 0 0 2px rgba(0,0,0,.3); }
.layers { left: 189px; width: 212px; height: 594px; border-color: #777; box-shadow: 0 1px 7px 1px rgba(0,0,0,.6); }
.wtitle { height: 30px; flex: none; border-radius: 8px 8px 0 0; background: linear-gradient(#e6e6e6, #d6d6d6); display: flex; align-items: center; justify-content: center; font-weight: bold; position: relative; white-space: nowrap; padding-bottom: 1px; }
.wtitle.off { justify-content: flex-start; padding-left: 5px; color: #8b8b8b; font-size: 11.600px; }
.close { position: absolute; right: 7px; top: 6px; width: 17px; height: 17px; }
.wilber { margin-left: 8px; }
.tools { display: grid; grid-template-columns: repeat(5, 32px); grid-auto-rows: 32.100px; margin-top: 1px; }
.tools > svg { width: 22px; height: 22px; margin: 5px; overflow: visible; }
.tools > .sel { width: 30px; height: 30px; margin: 1px; padding: 3px; border: 1px solid #8c8c8c; background: #b8b8b8; border-radius: 2px; }
.colors { height: 48px; flex: none; padding: 2px 0 0 52px; }
.totab-row { display: flex; height: 29px; flex: none; position: relative; z-index: 1; }
.totab { width: 103px; height: 29px; background: #ebebeb; border: 1px solid #aaa; border-bottom: 0; border-radius: 4px 4px 0 0; display: flex; align-items: center; gap: 5px; padding: 0 0 3px 5px; white-space: nowrap; }
.mb { margin-left: auto; margin-right: 6px; align-self: center; }
.topanel { margin: -1px 0 0 0; width: 160px; height: 206px; background: #ebebeb; border: 1px solid #aaa; border-radius: 3px; padding: 0 3px; }
.toscroll { display: flex; height: 176px; }
.tocol { width: 138px; display: flex; flex-direction: column; }
.airbrush { height: 21px; line-height: 21px; }
.moderow { display: flex; align-items: center; gap: 2px; height: 26px; }
.grow { flex: 1; margin-right: 1px; }
.scale { height: 36px; flex: none; border: 1px solid #1c1c1c; background: #f6f6f6; display: flex; align-items: center; position: relative; padding: 1px 0 1px 1px; }
.scale .fill { position: absolute; left: 1px; top: 1px; bottom: 1px; background: #a0cde8; border: 1px solid #84b8d8; }
.sl, .sv { position: relative; }
.sl { font-size: 11.500px; }
.sv { margin-left: auto; margin-right: 2px; font-size: 11.900px; }
.f100 { right: 14px; }
.f3 { width: 4px; }
.f5 { width: 9px; }
.step { width: 12px; height: 32px; background: #dadada; display: flex; flex-direction: column; align-items: center; justify-content: space-around; }
.s-to { margin-top: 5px; }
.brushrow { display: flex; height: 41px; margin-top: 5px; }
.brushbtn { width: 32px; height: 41px; margin-left: 1px; border: 1px solid #999; border-radius: 3px; background: linear-gradient(#f0f0f0, #dadada); display: flex; align-items: center; justify-content: center; }
.brushname { margin-left: 4px; width: 73px; line-height: 15px; }
.entry { height: 24px; border: 1px solid #999; border-radius: 3px; background: #f8f8f8; line-height: 22px; padding-left: 4px; margin-top: 1px; white-space: nowrap; overflow: hidden; font-size: 11.400px; }
.bedit { margin: 20px 0 0 8px; }
.sizerow { display: flex; align-items: center; margin-top: 4px; gap: 7px; }
.s-size { width: 110px; }
.minivs { width: 14px; display: flex; flex-direction: column; align-items: center; padding-top: 23px; }
.mt1 { width: 14px; height: 42px; background: #919191; margin-top: 4px; }
.mt2 { width: 14px; height: 87px; background: #dcdcdc; margin-bottom: 4px; }
.toicons { display: flex; height: 26px; align-items: center; padding-left: 9px; gap: 20.300px; }

.tabs { height: 28px; flex: none; display: flex; align-items: flex-end; gap: 2px; position: relative; z-index: 1; }
.tab { width: 30.500px; height: 27px; background: #d0d0d0; border: 1px solid #b4b4b4; border-bottom: 0; border-radius: 4px 4px 0 0; display: flex; align-items: center; justify-content: center; }
.tab.on { background: #ebebeb; height: 28px; width: 31px; }
.lpanel, .bpanel { background: #ebebeb; border: 1px solid #a8a8a8; border-radius: 4px; padding: 0 3px; flex: none; width: 210px; }
.lpanel { height: 290px; margin-top: -1px; }
.lm { margin-top: 3px; height: 27px; }
.lm .grow, .filter, .basic { margin-right: 1px; }
.s-lay { margin-top: 3px; width: 202px; }
.lockrow { display: flex; align-items: center; height: 30px; }
.lockrow svg { margin-left: 12px; }
.lockbtn { width: 24px; height: 24px; margin-left: 8px; border: 1px solid #888; border-radius: 3px; background: #bebebe; display: flex; align-items: center; justify-content: center; }
.checker { width: 16px; height: 16px; background: repeating-conic-gradient(#666 0 25%, #999 0 50%) 0 0 / 8px 8px; }
.list { display: grid; grid-template: 144px 14px / 186px 14px; border: 1px solid #c0c0c0; width: 202px; background: #f7f7f7; }
.rows { overflow: hidden; position: relative; }
.row { height: 30px; display: flex; align-items: center; padding-left: 3px; white-space: nowrap; position: relative; }
.row:first-child { margin-top: -2px; }
.row > span { margin-top: -1px; }
.row::before { content: ""; position: absolute; left: 17px; top: 0; bottom: 0; width: 19px; border: 1px dotted #aaa; border-width: 0 1px; }
.br { width: 11px; height: 30px; border-left: 1px dotted #000; margin: 0 6px 0 26px; background: repeating-linear-gradient(90deg, #000 0 1px, transparent 1px 2px) 0 15px / 11px 1px no-repeat; }
.br.last { height: 16px; align-self: flex-start; }
.exp { margin: 0 5px 0 22px; border-width: 7px 3.500px 0 !important; }
.thumb { width: 36px; height: 27px; border: 2px solid #000; background: repeating-conic-gradient(#666 0 25%, #999 0 50%) 0 0 / 8px 8px; margin-right: 4px; }
.thumb.red { background: linear-gradient(#c03048, #c03048) 1px 22px / 16px 1px no-repeat, repeating-conic-gradient(#666 0 25%, #999 0 50%) 0 0 / 8px 8px; }
.lvs { display: flex; flex-direction: column; align-items: center; background: #ebebeb; padding-top: 4px; }
.lv1 { width: 14px; height: 75px; background: #dcdcdc; margin-top: 3px; }
.lv2 { width: 14px; height: 42px; background: #919191; margin-bottom: 5px; }
.lhs { grid-column: 1 / 3; display: flex; align-items: center; background: #ebebeb; padding-left: 4px; }
.lh1 { width: 62px; height: 14px; background: #919191; margin-left: 3px; }
.lh2 { width: 98px; height: 14px; background: #dcdcdc; margin-right: 4px; }
.licons { display: flex; align-items: center; height: 30px; padding-left: 4px; gap: 11.100px; }
.grip { height: 7px; flex: none; display: flex; gap: 2px; justify-content: center; align-items: center; }
.grip i { width: 1px; height: 4px; background: #aaa; }
.tabs2 { height: 24px; flex: none; display: flex; gap: 2px; position: relative; z-index: 1; }
.tab2 { width: 25px; height: 23px; border: 1px solid #b4b4b4; border-bottom: 0; border-radius: 4px 4px 0 0; display: flex; align-items: center; justify-content: center; }
.tab2.on { background: #ebebeb; height: 24px; }
.bpanel { margin-top: -1px; height: 215px; }
.ent { background: #f8f8f8; }
.filter { margin-top: 3px; height: 25px; font-style: italic; color: #8a8a8a; }
.basic { margin-top: 3px; height: 25px; }
.bname { height: 21px; line-height: 19px; font-style: italic; white-space: nowrap; font-size: 12.100px; }
.bgrid { display: flex; height: 69px; width: 202px; border: 1px solid #c0c0c0; background: #fff; }
.bvs { width: 14px; background: #ebebeb; display: flex; flex-direction: column; align-items: center; padding-top: 4px; }
.bv { width: 14px; height: 42px; background: #919191; margin: 3px 0 4px; }
.s-sp { margin-top: 2px; width: 202px; }
.bicons { display: flex; align-items: center; height: 29px; padding-left: 10px; gap: 22px; }
```
